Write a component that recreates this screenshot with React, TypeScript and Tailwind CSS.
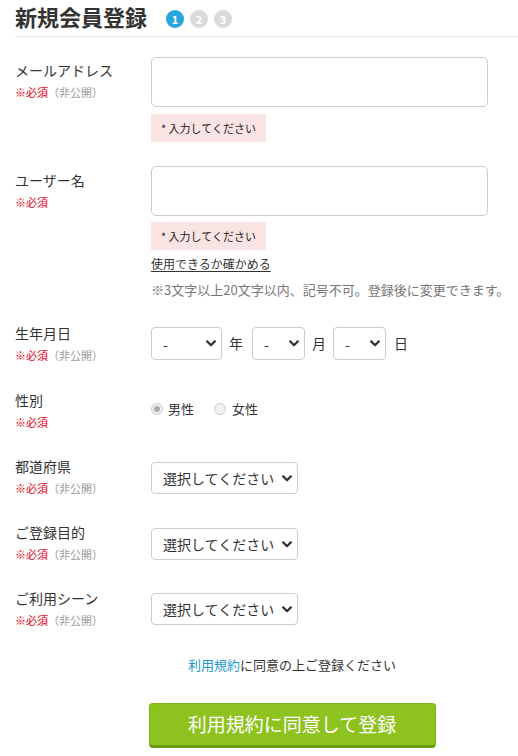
import React from "react";

const FONT = { fontFamily: '"Noto Sans CJK JP", "Noto Sans", sans-serif' };

function Chevron() {
  return (
    <svg width="10" height="7" viewBox="0 0 10 7" className="shrink-0">
      <path d="M1.2 1.4 L5 5.2 L8.8 1.4" fill="none" stroke="#333" strokeWidth="2.2" strokeLinecap="round" strokeLinejoin="round" />
    </svg>
  );
}

function Label({ title, pub = true, pt = "" }: { title: string; pub?: boolean; pt?: string }) {
  return (
    <div className={`w-[136px] shrink-0 ${pt}`}>
      <div className="text-[14px] leading-[20px] text-[#333]">{title}</div>
      <div className="mt-[4px] text-[11px] leading-[16px]">
        <span className="text-[#e60012]">※必須</span>
        {pub && <span className="text-[#999]">（非公開）</span>}
      </div>
    </div>
  );
}

function Select({ w, text, h = "h-[33px]", cls = "" }: { w: string; text: string; h?: string; cls?: string }) {
  return (
    <div className={`${w} ${h} ${cls} flex items-center justify-between rounded-[4px] border border-[#ccc] bg-white pl-[11px] pr-[5px]`}>
      <span className="text-[14px] text-[#333] leading-none">{text}</span>
      <Chevron />
    </div>
  );
}

function ErrorBox({ cls }: { cls: string }) {
  return (
    <div className={`flex h-[28px] w-fit items-center bg-[#f9e3e3] px-[10px] text-[11px] leading-none text-[#222] ${cls}`}>
      * 入力してください
    </div>
  );
}

export default function App() {
  return (
    <div className="h-[756px] w-[518px] overflow-hidden bg-white" style={FONT}>
      <div className="ml-[15px] w-[554px]">
        {/* Header */}
        <div className="flex h-[37px] items-start border-b border-[#e8e8e8]">
          <h1 className="mt-[1px] text-[22px] font-bold leading-[30px] text-[#333]">新規会員登録</h1>
          <div className="ml-[19px] mt-[10px] flex gap-[6px]">
            <span className="flex h-[18px] w-[18px] items-center justify-center rounded-full bg-[#29a5de] text-[11px] font-bold text-white">1</span>
            <span className="flex h-[18px] w-[18px] items-center justify-center rounded-full bg-[#dadada] text-[11px] font-bold text-white">2</span>
            <span className="flex h-[18px] w-[18px] items-center justify-center rounded-full bg-[#dadada] text-[11px] font-bold text-white">3</span>
          </div>
        </div>

        {/* Email */}
        <div className="mt-[20px] flex items-start">
          <Label title="メールアドレス" pt="pt-[3px]" />
          <div className="flex flex-col items-start">
            <div className="h-[50px] w-[337px] rounded-[5px] border border-[#ccc] bg-white" />
            <ErrorBox cls="mt-[7px]" />
          </div>
        </div>

        {/* Username */}
        <div className="mt-[24px] flex items-start">
          <Label title="ユーザー名" pub={false} pt="pt-[4px]" />
          <div className="flex flex-col items-start">
            <div className="h-[50px] w-[337px] rounded-[5px] border border-[#ccc] bg-white" />
            <ErrorBox cls="mt-[6px]" />
            <div className="mt-[5px] text-[12px] leading-[18px] text-[#333] underline underline-offset-2">使用できるか確かめる</div>
            <div className="mt-[8px] whitespace-nowrap text-[13px] leading-[18px] text-[#777]">※3文字以上20文字以内、記号不可。登録後に変更できます。</div>
          </div>
        </div>

        {/* Birth */}
        <div className="mt-[24px] flex items-start">
          <Label title="生年月日" />
          <div className="mt-[4px] flex items-center text-[14px] text-[#333]">
            <Select w="w-[71px]" text="-" />
            <span className="ml-[7px] mr-[9px]">年</span>
            <Select w="w-[53px]" text="-" />
            <span className="ml-[7px] mr-[7px]">月</span>
            <Select w="w-[53px]" text="-" />
            <span className="ml-[8px]">日</span>
          </div>
        </div>

        {/* Gender */}
        <div className="mt-[27px] flex items-start">
          <Label title="性別" pub={false} />
          <div className="mt-[9px] flex items-center text-[13px] leading-[20px] text-[#333]">
            <span className="flex h-[12px] w-[12px] items-center justify-center rounded-full border border-[#ccc] bg-[#eee]">
              <span className="h-[6px] w-[6px] rounded-full bg-[#aaa]" />
            </span>
            <span className="ml-[5px]">男性</span>
            <span className="ml-[20px] h-[12px] w-[12px] rounded-full border border-[#ccc] bg-[#f2f2f2]" />
            <span className="ml-[6px]">女性</span>
          </div>
        </div>

        {/* Prefecture */}
        <div className="mt-[26px] flex items-start">
          <Label title="都道府県" />
          <Select w="w-[147px]" h="h-[32px]" text="選択してください" cls="mt-[6px]" />
        </div>

        {/* Purpose */}
        <div className="mt-[26px] flex items-start">
          <Label title="ご登録目的" />
          <Select w="w-[147px]" h="h-[32px]" text="選択してください" cls="mt-[6px]" />
        </div>

        {/* Scene */}
        <div className="mt-[26px] flex items-start">
          <Label title="ご利用シーン" />
          <Select w="w-[147px]" h="h-[32px]" text="選択してください" cls="mt-[5px]" />
        </div>

        {/* Agreement */}
        <div className="mt-[28px] text-center text-[13px] leading-[18px] text-[#333]">
          <span className="text-[#1a9ad6]">利用規約</span>に同意の上ご登録ください
        </div>

        <div className="mt-[29px] flex justify-center">
          <button className="flex h-[45px] w-[287px] items-center justify-center rounded-[4px] border border-[#7fb319] border-b-[3px] border-b-[#6a9912] bg-[#8dc21f] text-[19px] text-white">
            利用規約に同意して登録
          </button>
        </div>
      </div>
    </div>
  );
}
